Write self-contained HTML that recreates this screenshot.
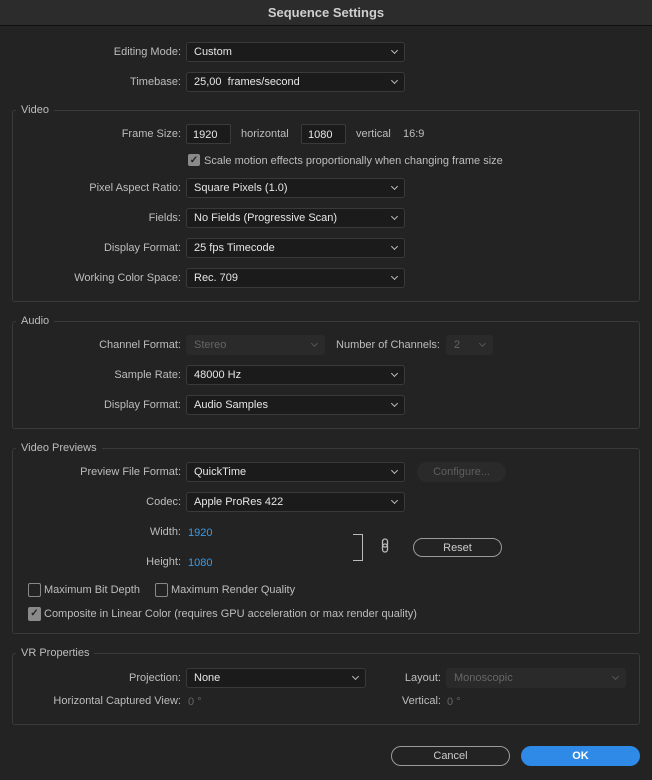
<!DOCTYPE html>
<html><head><style>
body{margin:0;width:652px;height:780px;background:#232323;font-family:"Liberation Sans",sans-serif;font-size:11px;color:#bdbdbd;position:relative;overflow:hidden}
div,span{position:absolute;box-sizing:border-box}
.title{left:0;top:0;width:652px;height:26px;background:#2c2c2c;border-bottom:1px solid #111;text-align:center;line-height:26px;font-weight:bold;font-size:13px;color:#cfcfcf}
.lbl{text-align:right;width:300px;line-height:21px;height:20px}
.sel{left:186px;width:219px;height:20px;background:#1b1b1b;border:1px solid #3a3a3a;border-radius:3px;color:#e6e6e6;padding-left:7px;line-height:19px}
.sel::after{content:"";position:absolute;right:7px;top:5px;width:4px;height:4px;border-right:1px solid #bbb;border-bottom:1px solid #bbb;transform:rotate(45deg)}
.dis{background:#2a2a2a;border-color:#2a2a2a;color:#666}
.dis::after{border-color:#555}
.box{left:12px;width:628px;border:1px solid #3a3a3a;border-radius:3px}
.leg{background:#232323;padding:0 5px;left:16px;line-height:14px;color:#bdbdbd}
.inp{height:20px;background:#1b1b1b;border:1px solid #3a3a3a;border-radius:2px;color:#e6e6e6;padding-left:6px;line-height:20px}
.cb{width:12px;height:12px;border:1px solid #888;border-radius:2px}
.cbc{background:#8a8a8a;border-color:#8a8a8a;color:#222;font-size:10px;line-height:11px;text-align:center;font-weight:bold}
.btn{height:20px;border:1px solid #9a9a9a;border-radius:10px;text-align:center;line-height:19px;color:#ccc}
.blue{color:#3c9be6}
</style></head><body>
<div class="title">Sequence Settings</div>

<div class="lbl" style="left:-119px;top:42px">Editing Mode:</div><div class="sel" style="top:42px">Custom</div>
<div class="lbl" style="left:-119px;top:72px">Timebase:</div><div class="sel" style="top:72px">25,00&nbsp; frames/second</div>

<div class="box" style="top:110px;height:192px"></div><span class="leg" style="top:103px">Video</span>
<div class="lbl" style="left:-119px;top:124px">Frame Size:</div>
<div class="inp" style="left:186px;top:124px;width:45px">1920</div>
<span style="left:241px;top:128px">horizontal</span>
<div class="inp" style="left:301px;top:124px;width:45px">1080</div>
<span style="left:356px;top:128px">vertical</span><span style="left:403px;top:128px">16:9</span>
<div class="cb cbc" style="left:188px;top:154px">✓</div><span style="left:204px;top:155px">Scale motion effects proportionally when changing frame size</span>
<div class="lbl" style="left:-119px;top:178px">Pixel Aspect Ratio:</div><div class="sel" style="top:178px">Square Pixels (1.0)</div>
<div class="lbl" style="left:-119px;top:208px">Fields:</div><div class="sel" style="top:208px">No Fields (Progressive Scan)</div>
<div class="lbl" style="left:-119px;top:238px">Display Format:</div><div class="sel" style="top:238px">25 fps Timecode</div>
<div class="lbl" style="left:-119px;top:268px">Working Color Space:</div><div class="sel" style="top:268px">Rec. 709</div>

<div class="box" style="top:321px;height:108px"></div><span class="leg" style="top:314px">Audio</span>
<div class="lbl" style="left:-119px;top:335px">Channel Format:</div><div class="sel dis" style="top:335px;width:139px">Stereo</div>
<div class="lbl" style="left:140px;top:335px">Number of Channels:</div><div class="sel dis" style="top:335px;left:446px;width:47px">2</div>
<div class="lbl" style="left:-119px;top:365px">Sample Rate:</div><div class="sel" style="top:365px">48000 Hz</div>
<div class="lbl" style="left:-119px;top:395px">Display Format:</div><div class="sel" style="top:395px">Audio Samples</div>

<div class="box" style="top:448px;height:186px"></div><span class="leg" style="top:441px">Video Previews</span>
<div class="lbl" style="left:-119px;top:462px">Preview File Format:</div><div class="sel" style="top:462px">QuickTime</div>
<div class="btn" style="left:417px;top:462px;width:89px;border-color:#2a2a2a;background:#2a2a2a;color:#5e5e5e">Configure...</div>
<div class="lbl" style="left:-119px;top:492px">Codec:</div><div class="sel" style="top:492px">Apple ProRes 422</div>
<div class="lbl" style="left:-119px;top:522px">Width:</div><span class="blue" style="left:188px;top:527px">1920</span>
<div class="lbl" style="left:-119px;top:552px">Height:</div><span class="blue" style="left:188px;top:557px">1080</span>
<div style="left:353px;top:534px;width:10px;height:27px;border:1.5px solid #bbb;border-left:none"></div>
<svg style="position:absolute;left:381px;top:538px" width="8" height="16"><rect x="1.5" y="1" width="5" height="8" rx="2.5" fill="none" stroke="#bbb" stroke-width="1.3"/><rect x="1.5" y="6" width="5" height="8" rx="2.5" fill="none" stroke="#bbb" stroke-width="1.3"/></svg>
<div class="btn" style="left:413px;top:538px;width:89px;height:19px;line-height:18px">Reset</div>
<div class="cb" style="left:28px;top:583px;width:13px;height:14px"></div><span style="left:44px;top:584px">Maximum Bit Depth</span>
<div class="cb" style="left:155px;top:583px;width:13px;height:14px"></div><span style="left:171px;top:584px">Maximum Render Quality</span>
<div class="cb cbc" style="left:28px;top:607px;width:13px;height:14px">✓</div><span style="left:44px;top:608px">Composite in Linear Color (requires GPU acceleration or max render quality)</span>

<div class="box" style="top:653px;height:72px"></div><span class="leg" style="top:646px">VR Properties</span>
<div class="lbl" style="left:-119px;top:668px">Projection:</div><div class="sel" style="top:668px;width:180px">None</div>
<div class="lbl" style="left:141px;top:668px">Layout:</div><div class="sel dis" style="top:668px;left:446px;width:180px">Monoscopic</div>
<div class="lbl" style="left:-119px;top:691px">Horizontal Captured View:</div><span style="left:188px;top:696px;color:#666">0 °</span>
<div class="lbl" style="left:141px;top:691px">Vertical:</div><span style="left:447px;top:696px;color:#666">0 °</span>

<div class="btn" style="left:391px;top:746px;width:119px">Cancel</div>
<div class="btn" style="left:521px;top:746px;width:119px;background:#2e8ae6;border-color:#2e8ae6;color:#fff;font-weight:bold">OK</div>
</body></html>
